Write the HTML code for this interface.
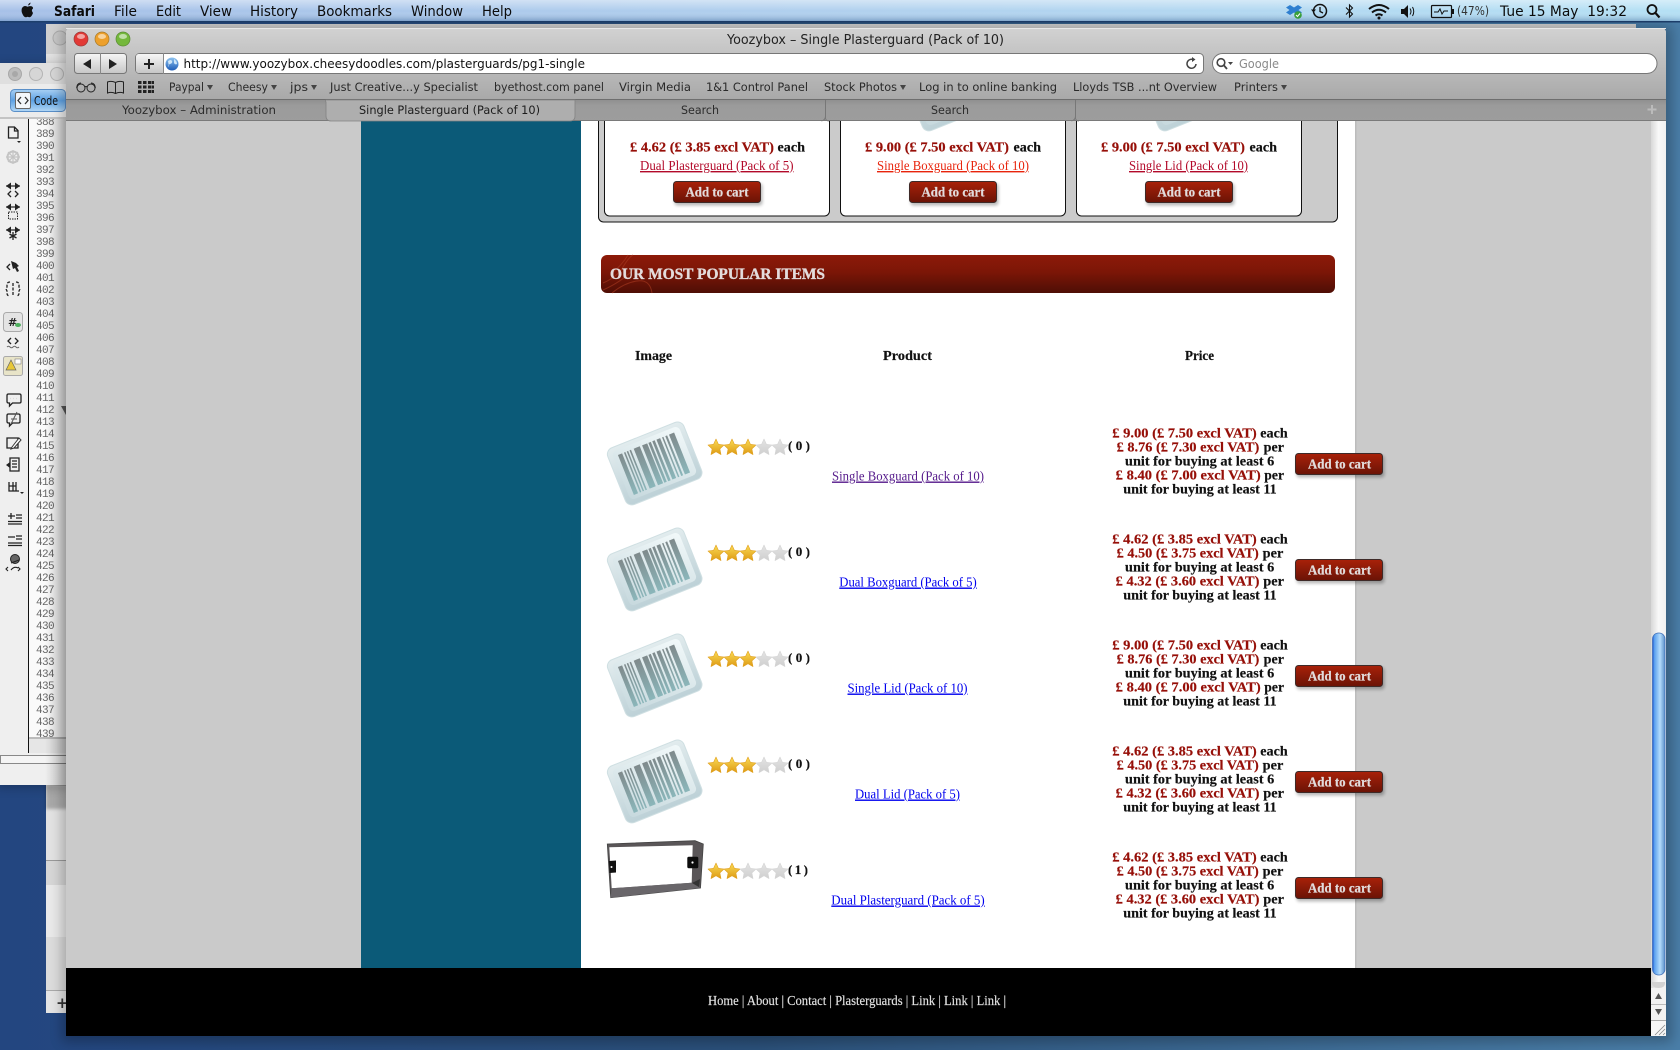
<!DOCTYPE html>
<html><head><meta charset="utf-8"><title>Yoozybox</title>
<style>
html,body{margin:0;padding:0;width:1680px;height:1050px;overflow:hidden;background:#24477f}
svg{display:block}
text{white-space:pre}
.s{font-family:"Liberation Serif",serif;font-size:14px;fill:#111}
.b{font-weight:bold;stroke:#111;stroke-width:.18}
.r{fill:#960f08;stroke:#960f08}
.u{text-decoration:underline}
.l{fill:#0000ee}
.c{font-family:"DejaVu Sans","Liberation Sans",sans-serif;font-size:11.5px;fill:#2a2a2a}
.m{font-family:"DejaVu Sans","Liberation Sans",sans-serif;font-size:14px;fill:#0c0c0c}
.w{font-family:"Liberation Serif",serif;font-weight:bold;font-size:13.5px;fill:#e2dcdc;stroke:#e2dcdc;stroke-width:.2}
.n{font-family:"Liberation Mono",monospace;font-size:11px;letter-spacing:-.6px;fill:#666}
.i{fill:none;stroke:#222;stroke-width:1.3}
</style></head><body>
<svg xmlns="http://www.w3.org/2000/svg" width="1680" height="1050" viewBox="0 0 1680 1050">
<defs>
<linearGradient id="wall" x1="0" x2="1" y1="0" y2="0"><stop offset="0" stop-color="#234680"/><stop offset=".45" stop-color="#2b5079"/><stop offset="1" stop-color="#4a7ea8"/></linearGradient>
<linearGradient id="menuH" x1="0" x2="1" y1="0" y2="0"><stop offset="0" stop-color="#a6c0e8"/><stop offset=".5" stop-color="#b0d0ee"/><stop offset="1" stop-color="#b4e0f4"/></linearGradient>
<linearGradient id="menuV" x1="0" x2="0" y1="0" y2="1"><stop offset="0" stop-color="#fff" stop-opacity=".45"/><stop offset=".5" stop-color="#fff" stop-opacity="0"/><stop offset="1" stop-color="#2a5f9e" stop-opacity=".4"/></linearGradient>
<linearGradient id="chrome" x1="0" x2="0" y1="0" y2="1"><stop offset="0" stop-color="#d2d2d2"/><stop offset="1" stop-color="#a9a9a9"/></linearGradient>
<linearGradient id="tabbar" x1="0" x2="0" y1="0" y2="1"><stop offset="0" stop-color="#8e8e8e"/><stop offset=".3" stop-color="#9b9b9b"/><stop offset="1" stop-color="#9d9d9d"/></linearGradient>
<linearGradient id="btn" x1="0" x2="0" y1="0" y2="1"><stop offset="0" stop-color="#a92109"/><stop offset="1" stop-color="#6a1306"/></linearGradient>
<linearGradient id="ban" x1="0" x2="0" y1="0" y2="1"><stop offset="0" stop-color="#8d1a08"/><stop offset=".45" stop-color="#7c1607"/><stop offset="1" stop-color="#4e0e05"/></linearGradient>
<linearGradient id="gold" x1="0" x2="0" y1="0" y2="1"><stop offset="0" stop-color="#fbdc55"/><stop offset="1" stop-color="#dd9a14"/></linearGradient>
<linearGradient id="grey" x1="0" x2="0" y1="0" y2="1"><stop offset="0" stop-color="#e4e4e4"/><stop offset="1" stop-color="#cfcfcf"/></linearGradient>
<linearGradient id="bcOuter" x1="0" x2="0" y1="0" y2="1"><stop offset="0" stop-color="#e2ecee"/><stop offset="1" stop-color="#bdd1d7"/></linearGradient>
<linearGradient id="bcInner" x1="1" x2="0" y1="0" y2="1"><stop offset="0" stop-color="#f2f9fa"/><stop offset="1" stop-color="#c6d8dd"/></linearGradient>
<linearGradient id="bcBar" x1="0" x2="0" y1="0" y2="1"><stop offset="0" stop-color="#7f8a8c"/><stop offset="1" stop-color="#8bb6ba"/></linearGradient>
<linearGradient id="scroll" x1="0" x2="1" y1="0" y2="0"><stop offset="0" stop-color="#1c50d0"/><stop offset=".15" stop-color="#5aa0ee"/><stop offset=".6" stop-color="#b4dcfc"/><stop offset="1" stop-color="#5a8fc8"/></linearGradient>
<linearGradient id="track" x1="0" x2="1" y1="0" y2="0"><stop offset="0" stop-color="#d8d8d8"/><stop offset=".5" stop-color="#f8f8f8"/><stop offset="1" stop-color="#f0f0f0"/></linearGradient>
<linearGradient id="fade" x1="0" x2="1" y1="0" y2="0"><stop offset="0" stop-color="#000" stop-opacity="0"/><stop offset="1" stop-color="#000" stop-opacity=".22"/></linearGradient>
<linearGradient id="code" x1="0" x2="0" y1="0" y2="1"><stop offset="0" stop-color="#a8d0f4"/><stop offset=".5" stop-color="#5ea2e4"/><stop offset="1" stop-color="#b4d8f6"/></linearGradient>
<linearGradient id="globe" x1="0" x2="0" y1="0" y2="1"><stop offset="0" stop-color="#8fc4f0"/><stop offset="1" stop-color="#1e5cb8"/></linearGradient>
<linearGradient id="btnC" x1="0" x2="0" y1="0" y2="1"><stop offset="0" stop-color="#f6f6f6"/><stop offset="1" stop-color="#c6c6c6"/></linearGradient>
<filter id="blur" x="-20%" y="-40%" width="140%" height="200%"><feGaussianBlur stdDeviation="1.6"/></filter>
<filter id="blur6" x="-20%" y="-20%" width="140%" height="140%"><feGaussianBlur stdDeviation="6"/></filter>
<clipPath id="numClip"><rect x="29" y="119" width="37" height="618"/></clipPath>

<path id="st" d="M0-8 2.4-2.7 8-2 3.9 1.9 5 7.6 0 4.8-5 7.6-3.9 1.9-8-2-2.4-2.7Z" stroke-linejoin="round"/>
<g id="s3"><use href="#st" x="716" y="447" fill="url(#gold)" stroke="#e0a020" stroke-width=".6"/><use href="#st" x="732" y="447" fill="url(#gold)" stroke="#e0a020" stroke-width=".6"/><use href="#st" x="748" y="447" fill="url(#gold)" stroke="#e0a020" stroke-width=".6"/><use href="#st" x="764" y="447" fill="url(#grey)" stroke="#d4d4d4" stroke-width=".6"/><use href="#st" x="780" y="447" fill="url(#grey)" stroke="#d4d4d4" stroke-width=".6"/></g>

<g id="bc">
<g transform="translate(48.5,42) rotate(-21.8)">
<rect x="-41" y="-30" width="82" height="61" rx="7" fill="url(#bcOuter)" stroke="#cfdfe2" stroke-width="1"/>
<rect x="-36" y="-26" width="72" height="52" rx="5" fill="url(#bcInner)"/>
<g fill="url(#bcBar)">
<rect x="-31" y="-21" width="4.5" height="43"/><rect x="-24.5" y="-21" width="1.5" height="43"/><rect x="-21.5" y="-21" width="1.5" height="43"/><rect x="-18.5" y="-21" width="1.6" height="43"/>
<rect x="-14" y="-21" width="6.5" height="43"/><rect x="-5" y="-21" width="5.5" height="43"/><rect x="1.8" y="-21" width="2.6" height="43"/><rect x="6" y="-21" width="2.6" height="43"/><rect x="10.5" y="-21" width="4" height="43"/><rect x="16.5" y="-21" width="1.5" height="43"/><rect x="20" y="-21" width="2" height="43"/><rect x="24" y="-21" width="5.5" height="43"/>
</g>
</g>
</g>

<g id="addbtn">
<rect x="1.5" y="2.5" width="88" height="22" rx="3" fill="#000" opacity=".28" filter="url(#blur)"/>
<rect x=".5" y=".5" width="87" height="21" rx="3" fill="url(#btn)" stroke="#3e2a28"/>
</g>
</defs>

<!-- wallpaper -->
<rect width="1680" height="1050" fill="url(#wall)"/>

<!-- back window -->
<path d="M46 30Q46 24 52 24H1625Q1630 24 1632 28V1013H46Z" fill="#e2e2e2"/>
<rect x="46" y="24" width="1590" height="30" fill="#cfcfcf"/>
<circle cx="60" cy="38" r="7" fill="#c6c6c6" stroke="#aaa"/>
<rect x="46" y="860" width="24" height="1" fill="#9a9a9a"/>
<rect x="46" y="861" width="24" height="24" fill="#d6d6d6"/>
<rect x="46" y="885" width="24" height="52" fill="#e9e9e9"/>
<rect x="46" y="937" width="24" height="53" fill="#dcdcdc"/>
<rect x="46" y="990" width="24" height="1" fill="#aaa"/>
<rect x="46" y="991" width="24" height="22" fill="#e4e4e4"/>
<text x="56" y="1008" class="m" font-weight="bold" style="font-size:15px;fill:#333">+</text>
<rect x="46" y="785" width="24" height="24" fill="#000" opacity=".25" filter="url(#blur)"/>

<!-- left editor window -->
<rect x="-4" y="66" width="76" height="720" fill="#000" opacity=".3" filter="url(#blur6)"/>
<path d="M0 67Q0 63 4 63H66V785H0Z" fill="#efefef"/>
<rect x="0" y="63" width="66" height="21" fill="#dfdfdf"/>
<rect x="0" y="84" width="66" height="33" fill="#ececec"/>
<rect x="0" y="117" width="66" height="2" fill="#c4c4c4"/>
<circle cx="15" cy="74" r="6.5" fill="#bdbdbd" stroke="#a8a8a8"/><circle cx="15" cy="74" r="3" fill="#a8a8a8"/>
<circle cx="36" cy="74" r="6.5" fill="#d6d6d6" stroke="#b4b4b4"/><circle cx="57" cy="74" r="6.5" fill="#d6d6d6" stroke="#b4b4b4"/>
<rect x="10.500" y="89.500" width="55" height="22" rx="4" fill="url(#code)" stroke="#5a8fc8"/>
<rect x="15.500" y="92.500" width="15" height="16" rx="1.500" fill="#f2f6fa" stroke="#666"/>
<path d="M21 97l-3 3.500 3 3.500M25 97l3 3.500-3 3.500" fill="none" stroke="#333" stroke-width="1.300"/>
<text x="34" y="105" class="c" textLength="24" lengthAdjust="spacingAndGlyphs" style="font-size:12px;fill:#111">Code</text>
<rect x="29" y="119" width="37" height="618" fill="#fafafa"/>
<rect x="28" y="119" width="1" height="634" fill="#111"/>
<g class="n" clip-path="url(#numClip)">
<text x="36" y="125" class="n">388</text><text x="36" y="137" class="n">389</text><text x="36" y="149" class="n">390</text><text x="36" y="161" class="n">391</text><text x="36" y="173" class="n">392</text><text x="36" y="185" class="n">393</text><text x="36" y="197" class="n">394</text><text x="36" y="209" class="n">395</text><text x="36" y="221" class="n">396</text><text x="36" y="233" class="n">397</text><text x="36" y="245" class="n">398</text><text x="36" y="257" class="n">399</text><text x="36" y="269" class="n">400</text><text x="36" y="281" class="n">401</text><text x="36" y="293" class="n">402</text><text x="36" y="305" class="n">403</text><text x="36" y="317" class="n">404</text><text x="36" y="329" class="n">405</text><text x="36" y="341" class="n">406</text><text x="36" y="353" class="n">407</text><text x="36" y="365" class="n">408</text><text x="36" y="377" class="n">409</text><text x="36" y="389" class="n">410</text><text x="36" y="401" class="n">411</text><text x="36" y="413" class="n">412</text><text x="36" y="425" class="n">413</text><text x="36" y="437" class="n">414</text><text x="36" y="449" class="n">415</text><text x="36" y="461" class="n">416</text><text x="36" y="473" class="n">417</text><text x="36" y="485" class="n">418</text><text x="36" y="497" class="n">419</text><text x="36" y="509" class="n">420</text><text x="36" y="521" class="n">421</text><text x="36" y="533" class="n">422</text><text x="36" y="545" class="n">423</text><text x="36" y="557" class="n">424</text><text x="36" y="569" class="n">425</text><text x="36" y="581" class="n">426</text><text x="36" y="593" class="n">427</text><text x="36" y="605" class="n">428</text><text x="36" y="617" class="n">429</text><text x="36" y="629" class="n">430</text><text x="36" y="641" class="n">431</text><text x="36" y="653" class="n">432</text><text x="36" y="665" class="n">433</text><text x="36" y="677" class="n">434</text><text x="36" y="689" class="n">435</text><text x="36" y="701" class="n">436</text><text x="36" y="713" class="n">437</text><text x="36" y="725" class="n">438</text><text x="36" y="737" class="n">439</text>
</g>
<rect x="29" y="737" width="37" height="16" fill="#e6e6e6"/>
<rect x="29" y="737" width="37" height="2" fill="#bbb"/>
<path d="M61 406h5v9z" fill="#666"/>
<rect x=".5" y="755.500" width="66" height="8" fill="#f4f4f4" stroke="#888"/>
<rect x="45" y="119" width="21" height="667" fill="url(#fade)"/>
<!-- editor tool icons -->
<path class="i" d="M8.500 127h6l3.500 3.500V138h-9.500zM14.500 127v4h3.500"/><path d="M17 141h4l-2 2z" fill="#222"/>
<circle cx="13" cy="157" r="5.500" fill="none" stroke="#c4c4c4" stroke-width="2"/><path d="M6 157h14M13 150v14M8 152l10 10M18 152l-10 10" stroke="#c4c4c4" stroke-width="1.200"/>
<path d="M6 186h14" stroke="#222" stroke-width="1.200"/><path d="M6 186l5-3.500v7zM20 186l-5-3.500v7z" fill="#222"/><path class="i" d="M11 191l-3 3 3 3M15 191l3 3-3 3" stroke-width="1.600"/>
<path d="M6 207h14" stroke="#222" stroke-width="1.200"/><path d="M6 207l5-3.500v7zM20 207l-5-3.500v7z" fill="#222"/><rect x="8.500" y="212" width="9" height="7" fill="none" stroke="#222" stroke-dasharray="1.500 1"/>
<path d="M6 230h14" stroke="#222" stroke-width="1.200"/><path d="M6 230l5-3.500v7zM20 230l-5-3.500v7z" fill="#222"/><path d="M13 232v8M9.500 234l7 4M16.500 234l-7 4" stroke="#222" stroke-width="1.300"/>
<path class="i" d="M10 264l-3 3 3 3" stroke-width="1.800"/><path d="M11 261l5 2 3 3-2 1 2 4-2 1-2-4-2 1z" fill="#222"/>
<path class="i" d="M10 282q-3 0-3 3v2l-1 2 1 2v2q0 3 3 3M16 282q3 0 3 3v2l1 2-1 2v2q0 3-3 3M13 283v12" stroke-dasharray="3 1.500"/>
<rect x="3.500" y="312.500" width="19" height="19" rx="3" fill="#e4e4e4" stroke="#aaa"/>
<text x="8" y="326" class="c" style="font-size:11px;font-weight:bold;fill:#222">#</text><ellipse cx="18" cy="325" rx="3" ry="2" fill="#4cae5c"/>
<path class="i" d="M11 338l-3 3 3 3M15 338l3 3-3 3"/><path d="M7 347q1.500-1.500 3 0t3 0 3 0 3 0" fill="none" stroke="#666"/>
<rect x="3.500" y="356.500" width="19" height="19" rx="2" fill="#e8e4c8" stroke="#aaa"/><path d="M11 360l5 10H6z" fill="#e8c838" stroke="#666" stroke-width=".7"/><rect x="15" y="359" width="6" height="5" fill="#fff" stroke="#666" stroke-width=".5"/>
<path class="i" d="M8.500 394h11q1.500 0 1.500 1.500v6q0 1.500-1.500 1.500h-7l-3 3v-3h-1q-1.500 0-1.500-1.500v-6q0-1.500 1.500-1.500zM10 398.500h.1M13 398.500h.1M16 398.500h.1"/>
<path class="i" d="M8.500 414h10q1.500 0 1.500 1.500v6q0 1.500-1.500 1.500h-6l-3 3v-3h-1q-1.500 0-1.500-1.500v-6q0-1.500 1.500-1.500z"/><path d="M11 419h6M17 412l-6 12" stroke="#555"/>
<path class="i" d="M7 438h11v10H7z" stroke="#888"/><path d="M12 447l7-9 2 2-7 8-3 1z" fill="#fff" stroke="#333"/>
<path class="i" d="M10 458h9v13h-9zM12 461h5M12 464h5M12 467h5"/><path d="M6 465l4-3v6z" fill="#222"/>
<path class="i" d="M9 482v9h10M9 486h7v-4M13 482v9M16 486v5"/><path d="M20 492h4l-2 2z" fill="#222"/>
<path d="M8 516h7M8 521.500h14M8 524h14M11 513v6M16 515h6M16 518h6" stroke="#222" stroke-width="1.300"/>
<path d="M8 537h7M8 543h14M8 545.500h14M16 536h6M16 539h6" stroke="#222" stroke-width="1.300"/>
<circle cx="15" cy="559" r="4.500" fill="#666" stroke="#222"/><path d="M11 563l8-3M8 567l-2 2 2 2M18 567l2 2-2 2M11 570q3-4 7-2" fill="none" stroke="#222" stroke-width="1.100"/>

<!-- Menu bar -->
<rect width="1680" height="22" fill="url(#menuH)"/>
<rect width="1680" height="22" fill="url(#menuV)"/>
<rect y="21" width="1680" height="1.500" fill="#1d3f6c"/>
<path d="M28 5.500q.3-2 2.500-3 .2 2.200-2.500 3zM33 8.500q-2.200 1.500 0 4.500-1.500 4-3.300 4.300-1.200 0-2-.5-1 .5-2 .5-2.500-.4-4-5.300-.7-4.500 2.200-5.800 1.800-.5 3.800.6 2-1.100 3.800-.5 1 .4 1.500 1.300z" fill="#111"/>
<text x="54" y="16" class="m" font-weight="bold" textLength="41" lengthAdjust="spacingAndGlyphs">Safari</text>
<text x="114" y="16" class="m" textLength="23" lengthAdjust="spacingAndGlyphs">File</text>
<text x="156" y="16" class="m" textLength="25" lengthAdjust="spacingAndGlyphs">Edit</text>
<text x="200" y="16" class="m" textLength="32" lengthAdjust="spacingAndGlyphs">View</text>
<text x="250" y="16" class="m" textLength="48" lengthAdjust="spacingAndGlyphs">History</text>
<text x="317" y="16" class="m" textLength="75" lengthAdjust="spacingAndGlyphs">Bookmarks</text>
<text x="411" y="16" class="m" textLength="52" lengthAdjust="spacingAndGlyphs">Window</text>
<text x="482" y="16" class="m" textLength="30" lengthAdjust="spacingAndGlyphs">Help</text>
<!-- status icons -->
<path d="M1290 5l4 2.500 4-2.500 4 2.500-3.500 2.500 3.500 2.500-4 2.500-4-2.500-4 2.500-4-2.500 3.500-2.500-3.500-2.500z" fill="#2e7fd0"/><circle cx="1298" cy="15" r="3.800" fill="#3aa03a"/><path d="M1296 15l1.500 1.500 2.500-3" fill="none" stroke="#fff" stroke-width="1"/>
<circle cx="1320" cy="11" r="6.500" fill="none" stroke="#111" stroke-width="1.500"/><path d="M1320 7v4.500l3 1.500" fill="none" stroke="#111" stroke-width="1.300"/><path d="M1311 9.500l2.500 3 2.500-3z" fill="#111"/>
<path d="M1346 7.500l6.500 6.500-3 3v-12l3 3-6.500 6.500" fill="none" stroke="#111" stroke-width="1.100"/>
<path d="M1369 9q10-8 20 0M1372 12.500q7-5.500 14 0M1375.500 15.500q3.500-2.500 7 0" fill="none" stroke="#111" stroke-width="2"/><circle cx="1379" cy="18" r="1.500" fill="#111"/>
<path d="M1401 9h3l4-4v13l-4-4h-3z" fill="#111"/><path d="M1410 8.500q2 3 0 6M1412.500 7q2.500 4.500 0 9" fill="none" stroke="#111" stroke-width="1"/>
<rect x="1431.500" y="5.500" width="20" height="12" rx="1" fill="none" stroke="#111" stroke-width="1.200"/><rect x="1452" y="9" width="2" height="5" fill="#111"/><path d="M1434 12h4l2-3 2 5 2-3h4" fill="none" stroke="#111"/>
<text x="1457" y="15" class="m" textLength="32" lengthAdjust="spacingAndGlyphs" style="font-size:12px;fill:#333">(47%)</text>
<text x="1500" y="16" class="m" textLength="127" lengthAdjust="spacingAndGlyphs">Tue 15 May  19:32</text>
<circle cx="1652" cy="9.500" r="4.500" fill="none" stroke="#111" stroke-width="1.800"/><path d="M1655.500 13l4 4.500" stroke="#111" stroke-width="2.200"/>

<!-- Safari window shadow + shell -->
<rect x="62" y="26" width="1610" height="1016" fill="#000" opacity=".25" filter="url(#blur6)"/>
<path d="M66 33Q66 28 71 28H1661Q1666 28 1666 33V1036H66Z" fill="#cacaca"/>

<!-- PAGE -->
<rect x="361" y="114" width="220" height="854" fill="#0b5a78"/>
<rect x="581" y="114" width="774" height="854" fill="#fff"/>
<rect x="1355" y="114" width="1.500" height="854" fill="#bcbcbc"/>

<!-- top product cards -->
<rect x="598.500" y="100" width="739" height="122" rx="5" fill="#cbcbcb" stroke="#111"/>
<rect x="604.500" y="100" width="225" height="116" rx="5" fill="#fff" stroke="#111"/>
<rect x="840.500" y="100" width="225" height="116" rx="5" fill="#fff" stroke="#111"/>
<rect x="1076.500" y="100" width="225" height="116" rx="5" fill="#fff" stroke="#111"/>
<use href="#bc" x="903" y="47"/>
<use href="#bc" x="1139" y="47"/>

<text x="630" y="151.500" class="s b r" textLength="144" lengthAdjust="spacingAndGlyphs">£ 4.62 (£ 3.85 excl VAT)</text>
<text x="777.500" y="151.500" class="s b" textLength="27.500" lengthAdjust="spacingAndGlyphs">each</text>
<text x="865" y="151.500" class="s b r" textLength="144" lengthAdjust="spacingAndGlyphs">£ 9.00 (£ 7.50 excl VAT)</text>
<text x="1013.500" y="151.500" class="s b" textLength="27.500" lengthAdjust="spacingAndGlyphs">each</text>
<text x="1101" y="151.500" class="s b r" textLength="144" lengthAdjust="spacingAndGlyphs">£ 9.00 (£ 7.50 excl VAT)</text>
<text x="1249.500" y="151.500" class="s b" textLength="27.500" lengthAdjust="spacingAndGlyphs">each</text>

<text x="640" y="170" class="s u" style="fill:#b30a2a" textLength="153.500" lengthAdjust="spacingAndGlyphs">Dual Plasterguard (Pack of 5)</text>
<text x="877" y="170" class="s u" style="fill:#e8240c" textLength="152" lengthAdjust="spacingAndGlyphs">Single Boxguard (Pack of 10)</text>
<text x="1129" y="170" class="s u" style="fill:#b30a2a" textLength="119" lengthAdjust="spacingAndGlyphs">Single Lid (Pack of 10)</text>

<use href="#addbtn" x="673" y="181"/><text x="685.500" y="196.500" class="w" textLength="63" lengthAdjust="spacingAndGlyphs">Add to cart</text>
<use href="#addbtn" x="909" y="181"/><text x="921.500" y="196.500" class="w" textLength="63" lengthAdjust="spacingAndGlyphs">Add to cart</text>
<use href="#addbtn" x="1145" y="181"/><text x="1157.500" y="196.500" class="w" textLength="63" lengthAdjust="spacingAndGlyphs">Add to cart</text>

<!-- banner -->
<rect x="601" y="255" width="734" height="38" rx="6" fill="url(#ban)"/>
<g fill="none" stroke="#a83a22" stroke-width="1" opacity=".6">
<path d="M603 283q14-6 20-16t10-12M603 290q18-8 30-20M612 293q12-10 25-12t15 12M628 255q-6 10-16 18"/>
</g>
<text x="610" y="279" class="w" style="font-size:16px;fill:#e4dcdc;stroke-width:.35" textLength="215" lengthAdjust="spacingAndGlyphs">OUR MOST POPULAR ITEMS</text>

<!-- table header -->
<text x="635" y="360" class="s b" textLength="37" lengthAdjust="spacingAndGlyphs">Image</text>
<text x="883" y="360" class="s b" textLength="49" lengthAdjust="spacingAndGlyphs">Product</text>
<text x="1185" y="360" class="s b" textLength="29" lengthAdjust="spacingAndGlyphs">Price</text>

<!-- row 1 -->
<use href="#bc" x="606" y="421"/>
<use href="#s3"/>
<text x="788" y="450" class="s b" textLength="22" lengthAdjust="spacing" style="font-size:13px">( 0 )</text>
<text x="832" y="480.500" class="s u" style="fill:#551a8b" textLength="152" lengthAdjust="spacingAndGlyphs">Single Boxguard (Pack of 10)</text>
<text x="1112.300" y="437.500" class="s b r" textLength="144.400" lengthAdjust="spacingAndGlyphs">£ 9.00 (£ 7.50 excl VAT)</text>
<text x="1260.300" y="437.500" class="s b" textLength="27.400" lengthAdjust="spacingAndGlyphs">each</text>
<text x="1116.700" y="451.500" class="s b r" textLength="142.600" lengthAdjust="spacingAndGlyphs">£ 8.76 (£ 7.30 excl VAT)</text>
<text x="1263.700" y="451.500" class="s b" textLength="20.300" lengthAdjust="spacingAndGlyphs">per</text>
<text x="1125" y="465.500" class="s b" textLength="149.300" lengthAdjust="spacingAndGlyphs">unit for buying at least 6</text>
<text x="1115.700" y="479.500" class="s b r" textLength="145" lengthAdjust="spacingAndGlyphs">£ 8.40 (£ 7.00 excl VAT)</text>
<text x="1264.300" y="479.500" class="s b" textLength="19.700" lengthAdjust="spacingAndGlyphs">per</text>
<text x="1123.300" y="493.500" class="s b" textLength="153.400" lengthAdjust="spacingAndGlyphs">unit for buying at least 11</text>
<use href="#addbtn" x="1295" y="453"/><text x="1308" y="468.500" class="w" textLength="63" lengthAdjust="spacingAndGlyphs">Add to cart</text>

<!-- row 2 -->
<g transform="translate(0,106)">
<use href="#bc" x="606" y="421"/>
<use href="#s3"/>
<text x="788" y="450" class="s b" textLength="22" lengthAdjust="spacing" style="font-size:13px">( 0 )</text>
<text x="839.300" y="480.500" class="s u l" textLength="137.400" lengthAdjust="spacingAndGlyphs">Dual Boxguard (Pack of 5)</text>
<text x="1112.300" y="437.500" class="s b r" textLength="144.400" lengthAdjust="spacingAndGlyphs">£ 4.62 (£ 3.85 excl VAT)</text>
<text x="1260.300" y="437.500" class="s b" textLength="27.400" lengthAdjust="spacingAndGlyphs">each</text>
<text x="1116.700" y="451.500" class="s b r" textLength="142" lengthAdjust="spacingAndGlyphs">£ 4.50 (£ 3.75 excl VAT)</text>
<text x="1262.700" y="451.500" class="s b" textLength="20.600" lengthAdjust="spacingAndGlyphs">per</text>
<text x="1125" y="465.500" class="s b" textLength="149.300" lengthAdjust="spacingAndGlyphs">unit for buying at least 6</text>
<text x="1115.700" y="479.500" class="s b r" textLength="143.700" lengthAdjust="spacingAndGlyphs">£ 4.32 (£ 3.60 excl VAT)</text>
<text x="1263.300" y="479.500" class="s b" textLength="20.700" lengthAdjust="spacingAndGlyphs">per</text>
<text x="1123.300" y="493.500" class="s b" textLength="153.400" lengthAdjust="spacingAndGlyphs">unit for buying at least 11</text>
<use href="#addbtn" x="1295" y="453"/><text x="1308" y="468.500" class="w" textLength="63" lengthAdjust="spacingAndGlyphs">Add to cart</text>
</g>

<!-- row 3 -->
<g transform="translate(0,212)">
<use href="#bc" x="606" y="421"/>
<use href="#s3"/>
<text x="788" y="450" class="s b" textLength="22" lengthAdjust="spacing" style="font-size:13px">( 0 )</text>
<text x="847.500" y="480.500" class="s u l" textLength="120" lengthAdjust="spacingAndGlyphs">Single Lid (Pack of 10)</text>
<text x="1112.300" y="437.500" class="s b r" textLength="144.400" lengthAdjust="spacingAndGlyphs">£ 9.00 (£ 7.50 excl VAT)</text>
<text x="1260.300" y="437.500" class="s b" textLength="27.400" lengthAdjust="spacingAndGlyphs">each</text>
<text x="1116.700" y="451.500" class="s b r" textLength="142.600" lengthAdjust="spacingAndGlyphs">£ 8.76 (£ 7.30 excl VAT)</text>
<text x="1263.700" y="451.500" class="s b" textLength="20.300" lengthAdjust="spacingAndGlyphs">per</text>
<text x="1125" y="465.500" class="s b" textLength="149.300" lengthAdjust="spacingAndGlyphs">unit for buying at least 6</text>
<text x="1115.700" y="479.500" class="s b r" textLength="145" lengthAdjust="spacingAndGlyphs">£ 8.40 (£ 7.00 excl VAT)</text>
<text x="1264.300" y="479.500" class="s b" textLength="19.700" lengthAdjust="spacingAndGlyphs">per</text>
<text x="1123.300" y="493.500" class="s b" textLength="153.400" lengthAdjust="spacingAndGlyphs">unit for buying at least 11</text>
<use href="#addbtn" x="1295" y="453"/><text x="1308" y="468.500" class="w" textLength="63" lengthAdjust="spacingAndGlyphs">Add to cart</text>
</g>

<!-- row 4 -->
<g transform="translate(0,318)">
<use href="#bc" x="606" y="421"/>
<use href="#s3"/>
<text x="788" y="450" class="s b" textLength="22" lengthAdjust="spacing" style="font-size:13px">( 0 )</text>
<text x="855" y="480.500" class="s u l" textLength="105" lengthAdjust="spacingAndGlyphs">Dual Lid (Pack of 5)</text>
<text x="1112.300" y="437.500" class="s b r" textLength="144.400" lengthAdjust="spacingAndGlyphs">£ 4.62 (£ 3.85 excl VAT)</text>
<text x="1260.300" y="437.500" class="s b" textLength="27.400" lengthAdjust="spacingAndGlyphs">each</text>
<text x="1116.700" y="451.500" class="s b r" textLength="142" lengthAdjust="spacingAndGlyphs">£ 4.50 (£ 3.75 excl VAT)</text>
<text x="1262.700" y="451.500" class="s b" textLength="20.600" lengthAdjust="spacingAndGlyphs">per</text>
<text x="1125" y="465.500" class="s b" textLength="149.300" lengthAdjust="spacingAndGlyphs">unit for buying at least 6</text>
<text x="1115.700" y="479.500" class="s b r" textLength="143.700" lengthAdjust="spacingAndGlyphs">£ 4.32 (£ 3.60 excl VAT)</text>
<text x="1263.300" y="479.500" class="s b" textLength="20.700" lengthAdjust="spacingAndGlyphs">per</text>
<text x="1123.300" y="493.500" class="s b" textLength="153.400" lengthAdjust="spacingAndGlyphs">unit for buying at least 11</text>
<use href="#addbtn" x="1295" y="453"/><text x="1308" y="468.500" class="w" textLength="63" lengthAdjust="spacingAndGlyphs">Add to cart</text>
</g>

<!-- row 5 -->
<path d="M607.300 844L695 840.700 703.300 844 700.500 888 610.700 897.700Z" fill="#5a5658" stroke="#444" stroke-width=".8"/>
<path d="M609.300 847.300L692.700 845.300 691.700 882.700 611.700 888.300Z" fill="#fff"/>
<path d="M611.700 888.300L691.700 882.700 700 888 610.700 897.700Z" fill="#69666a"/>
<path d="M692 883l7 4 1-8z" fill="#333"/>
<path d="M609 861l7-.5v12l-6.500.5z" fill="#111"/><circle cx="611.500" cy="867" r="1" fill="#fff"/>
<rect x="687.300" y="856.700" width="11" height="11.500" rx="1.500" fill="#0c0c0c"/><circle cx="692.500" cy="862.500" r="1.100" fill="#fff"/>
<g transform="translate(0,424)">
<use href="#st" x="716" y="447" fill="url(#gold)" stroke="#e0a020" stroke-width=".6"/><use href="#st" x="732" y="447" fill="url(#gold)" stroke="#e0a020" stroke-width=".6"/><use href="#st" x="748" y="447" fill="url(#grey)" stroke="#d4d4d4" stroke-width=".6"/><use href="#st" x="764" y="447" fill="url(#grey)" stroke="#d4d4d4" stroke-width=".6"/><use href="#st" x="780" y="447" fill="url(#grey)" stroke="#d4d4d4" stroke-width=".6"/>
<text x="788" y="450" class="s b" textLength="20" lengthAdjust="spacing" style="font-size:13px">( 1 )</text>
<text x="831.300" y="480.500" class="s u l" textLength="153.400" lengthAdjust="spacingAndGlyphs">Dual Plasterguard (Pack of 5)</text>
<text x="1112.300" y="437.500" class="s b r" textLength="144.400" lengthAdjust="spacingAndGlyphs">£ 4.62 (£ 3.85 excl VAT)</text>
<text x="1260.300" y="437.500" class="s b" textLength="27.400" lengthAdjust="spacingAndGlyphs">each</text>
<text x="1116.700" y="451.500" class="s b r" textLength="142" lengthAdjust="spacingAndGlyphs">£ 4.50 (£ 3.75 excl VAT)</text>
<text x="1262.700" y="451.500" class="s b" textLength="20.600" lengthAdjust="spacingAndGlyphs">per</text>
<text x="1125" y="465.500" class="s b" textLength="149.300" lengthAdjust="spacingAndGlyphs">unit for buying at least 6</text>
<text x="1115.700" y="479.500" class="s b r" textLength="143.700" lengthAdjust="spacingAndGlyphs">£ 4.32 (£ 3.60 excl VAT)</text>
<text x="1263.300" y="479.500" class="s b" textLength="20.700" lengthAdjust="spacingAndGlyphs">per</text>
<text x="1123.300" y="493.500" class="s b" textLength="153.400" lengthAdjust="spacingAndGlyphs">unit for buying at least 11</text>
<use href="#addbtn" x="1295" y="453"/><text x="1308" y="468.500" class="w" textLength="63" lengthAdjust="spacingAndGlyphs">Add to cart</text>
</g>

<!-- footer -->
<rect x="66" y="968" width="1585" height="68" fill="#000"/>
<text x="708" y="1005" class="s" style="fill:#e2e2e2;stroke:#e2e2e2;stroke-width:.15;font-size:13.500px" textLength="298" lengthAdjust="spacingAndGlyphs">Home | About | Contact | Plasterguards | Link | Link | Link |</text>

<!-- scrollbar -->
<rect x="1651" y="121" width="15" height="915" fill="url(#track)"/>
<path d="M1652 982h13v1q0 5-6.500 5t-6.500-5z" fill="#d2d2d2"/>
<rect x="1652.500" y="633" width="12.500" height="342" rx="6" fill="url(#scroll)" stroke="#3f6fb8" stroke-width=".8"/>
<rect x="1651" y="988" width="15" height="33" fill="#f2f2f2"/>
<path d="M1658.500 993l3.500 6h-7z" fill="#555"/><path d="M1658.500 1015l3.500-6h-7z" fill="#555"/>
<rect x="1651" y="1004" width="15" height="1" fill="#bbb"/>
<rect x="1651" y="1020" width="15" height="1" fill="#aaa"/>
<rect x="1651" y="1021" width="15" height="15" fill="#f6f6f6"/>
<path d="M1655 1035l10-10M1659 1035l6-6M1663 1035l2-2" stroke="#888" stroke-width=".8"/>

<!-- Safari chrome -->
<path d="M66 33Q66 28 71 28H1661Q1666 28 1666 33V99H66Z" fill="url(#chrome)"/>
<rect x="66" y="28" width="1600" height="1" fill="#e8e8e8"/>
<circle cx="81" cy="39" r="7" fill="#e23a36" stroke="#9a3a3a" stroke-width=".7"/><ellipse cx="81" cy="36.500" rx="4" ry="2.500" fill="#fff" opacity=".55"/>
<circle cx="102" cy="39" r="7" fill="#eda02c" stroke="#a67a2a" stroke-width=".7"/><ellipse cx="102" cy="36.500" rx="4" ry="2.500" fill="#fff" opacity=".55"/>
<circle cx="123" cy="39" r="7" fill="#74b83c" stroke="#5a8a34" stroke-width=".7"/><ellipse cx="123" cy="36.500" rx="4" ry="2.500" fill="#fff" opacity=".55"/>
<text x="727" y="44" class="c" textLength="277" lengthAdjust="spacingAndGlyphs" style="font-size:13px;fill:#222">Yoozybox – Single Plasterguard (Pack of 10)</text>

<rect x="74.500" y="53.500" width="52" height="20" rx="3" fill="url(#btnC)" stroke="#777"/>
<rect x="100" y="53" width="1" height="21" fill="#888"/>
<path d="M83 64l8-5v10z" fill="#222"/><path d="M117 64l-8-5v10z" fill="#222"/>
<rect x="135.500" y="53.500" width="1068" height="20" rx="4" fill="#fff" stroke="#777"/>
<path d="M139 54h24v19h-24q-3 0-3-3v-13q0-3 3-3z" fill="url(#btnC)"/>
<rect x="163" y="53" width="1" height="21" fill="#888"/>
<path d="M149 59v10M144 64h10" stroke="#222" stroke-width="2"/>
<circle cx="172" cy="64" r="6.500" fill="url(#globe)"/><path d="M168 61q3-2 4 0t-2 3-1 3M174 59q3 2 3 5-2 1-3-1" fill="#cfe6f8"/>
<text x="183.500" y="68" class="c" textLength="401.500" lengthAdjust="spacingAndGlyphs" style="font-size:12.500px;fill:#111">http://www.yoozybox.cheesydoodles.com/plasterguards/pg1-single</text>
<path d="M1194 60a4.500 4.500 0 1 0 2 4" fill="none" stroke="#444" stroke-width="1.500"/><path d="M1192 57l3.500 2.500-3.500 2.500z" fill="#444"/>
<rect x="1212.500" y="53.500" width="444.500" height="20" rx="10" fill="#fff" stroke="#777"/>
<circle cx="1221" cy="62.500" r="3.800" fill="none" stroke="#444" stroke-width="1.600"/><path d="M1224 65.500l3 3.500" stroke="#444" stroke-width="1.800"/><path d="M1228 62h5l-2.500 3z" fill="#444"/>
<text x="1239" y="68" class="c" textLength="40" lengthAdjust="spacingAndGlyphs" style="font-size:12.500px;fill:#8a8a8a">Google</text>

<!-- bookmarks bar -->
<circle cx="81" cy="88" r="4" fill="none" stroke="#222"/><circle cx="91" cy="88" r="4" fill="none" stroke="#222"/><path d="M85 87q1-1 2 0M77 87l-1 0M95 87l1 0" fill="none" stroke="#222"/><path d="M77 86q1-3 4-3M95 86q-1-3-4-3" fill="none" stroke="#222"/>
<path d="M107.500 93V82q4-1.500 8 .5 4-2 8-.5v11q-4-1.500-8 .5-4-2-8-.5zM115.500 83v11" fill="none" stroke="#222"/>
<g fill="#222"><rect x="138" y="81" width="3.500" height="3"/><rect x="143" y="81" width="3.500" height="3"/><rect x="148" y="81" width="3.500" height="3"/><rect x="152" y="81" width="2" height="3"/><rect x="138" y="85.500" width="3.500" height="3"/><rect x="143" y="85.500" width="3.500" height="3"/><rect x="148" y="85.500" width="3.500" height="3"/><rect x="152" y="85.500" width="2" height="3"/><rect x="138" y="90" width="3.500" height="3"/><rect x="143" y="90" width="3.500" height="3"/><rect x="148" y="90" width="3.500" height="3"/><rect x="152" y="90" width="2" height="3"/></g>
<g id="bm">
<text x="169" y="91" class="c" textLength="35" lengthAdjust="spacingAndGlyphs">Paypal</text><path d="M207 85h6l-3 5z" fill="#444"/>
<text x="228" y="91" class="c" textLength="40" lengthAdjust="spacingAndGlyphs">Cheesy</text><path d="M271 85h6l-3 5z" fill="#444"/>
<text x="290" y="91" class="c" textLength="18" lengthAdjust="spacingAndGlyphs">jps</text><path d="M311 85h6l-3 5z" fill="#444"/>
<text x="330" y="91" class="c" textLength="148" lengthAdjust="spacingAndGlyphs">Just Creative...y Specialist</text>
<text x="494" y="91" class="c" textLength="110" lengthAdjust="spacingAndGlyphs">byethost.com panel</text>
<text x="619" y="91" class="c" textLength="72" lengthAdjust="spacingAndGlyphs">Virgin Media</text>
<text x="706" y="91" class="c" textLength="102" lengthAdjust="spacingAndGlyphs">1&amp;1 Control Panel</text>
<text x="824" y="91" class="c" textLength="73" lengthAdjust="spacingAndGlyphs">Stock Photos</text><path d="M900 85h6l-3 5z" fill="#444"/>
<text x="919" y="91" class="c" textLength="138" lengthAdjust="spacingAndGlyphs">Log in to online banking</text>
<text x="1073" y="91" class="c" textLength="144" lengthAdjust="spacingAndGlyphs">Lloyds TSB ...nt Overview</text>
<text x="1234" y="91" class="c" textLength="44" lengthAdjust="spacingAndGlyphs">Printers</text><path d="M1281 85h6l-3 5z" fill="#444"/>
</g>

<!-- tab bar -->
<rect x="66" y="99" width="1600" height="22" fill="url(#tabbar)"/>
<rect x="66" y="99" width="1600" height="1" fill="#6e6e6e"/>
<rect x="66" y="120" width="1600" height="1" fill="#7a7a7a"/>
<path d="M326 100q-1 0 0 2v14q0 5 5 5h239q5 0 5-5v-14q0-2 0-2z" fill="#aeaeae" stroke="#828282" stroke-width=".8"/>
<path d="M825.500 100v16q0 4-4 5M1075.500 100v16q0 4-4 5" fill="none" stroke="#777"/>
<path d="M829 121q-4 0-3.500-5M1079 121q-4 0-3.500-5" fill="none" stroke="#777" stroke-width=".8"/>
<text x="122" y="114" class="c" textLength="154" lengthAdjust="spacingAndGlyphs" style="fill:#2c2c2c">Yoozybox – Administration</text>
<text x="359" y="114" class="c" textLength="181" lengthAdjust="spacingAndGlyphs" style="fill:#1c1c1c">Single Plasterguard (Pack of 10)</text>
<text x="681" y="114" class="c" textLength="38" lengthAdjust="spacingAndGlyphs" style="fill:#2c2c2c">Search</text>
<text x="931" y="114" class="c" textLength="38" lengthAdjust="spacingAndGlyphs" style="fill:#2c2c2c">Search</text>
<path d="M1652 105v9M1647.500 109.500h9" stroke="#bbb" stroke-width="2"/>
</svg>
</body></html>
